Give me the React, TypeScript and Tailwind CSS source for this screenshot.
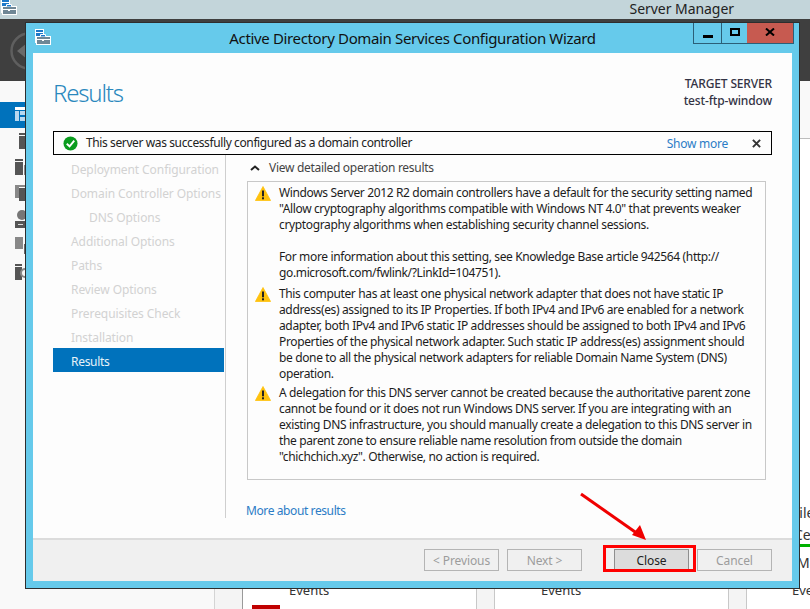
import React from "react";

const font = { fontFamily: '"Noto Sans", "Open Sans", sans-serif' };

function AppIcon({ className }: { className: string }) {
  return (
    <svg viewBox="0 0 16 16" className={className}>
      <rect x="0.5" y="0.5" width="8" height="13" fill="#1e78c8" stroke="#ffffff" />
      <rect x="1" y="3" width="7" height="1" fill="#ffffff" />
      <rect x="1.5" y="7.5" width="14" height="8" fill="#6f8796" stroke="#ffffff" />
      <path d="M5.5 7.5V5.5H10.5V7.5" fill="#1e78c8" stroke="#ffffff" />
      <path d="M1.5 10.5H15.5" stroke="#ffffff" />
      <rect x="7" y="10" width="2" height="2" fill="#ffffff" />
    </svg>
  );
}

function Warn({ className }: { className: string }) {
  return (
    <svg viewBox="0 0 16 15" className={className}>
      <path d="M8 0.5L15.6 14.5H0.4Z" fill="#ffc20e" stroke="#ffc20e" strokeWidth="0.8" strokeLinejoin="round" />
      <rect x="7" y="4.5" width="2" height="5.8" fill="#222222" />
      <rect x="7" y="11.3" width="2" height="2" fill="#222222" />
    </svg>
  );
}

function NavIcons({ className }: { className: string }) {
  return (
    <svg viewBox="0 0 30 200" className={className}>
      <rect x="15" y="17" width="11" height="3" fill="#ffffff" />
      <rect x="15" y="21" width="4" height="10" fill="#b8d8f0" />
      <rect x="20" y="21" width="6" height="4" fill="#b8d8f0" />
      <rect x="20" y="27" width="6" height="4" fill="#b8d8f0" />
      <rect x="19" y="43" width="7" height="2" fill="#555555" />
      <rect x="19" y="46" width="7" height="13" fill="#555555" />
      <rect x="15" y="69" width="8" height="2" fill="#555555" />
      <rect x="15" y="72" width="8" height="13" fill="#555555" />
      <rect x="24" y="75" width="2" height="10" fill="#888888" />
      <rect x="15" y="95" width="4" height="13" fill="#888888" />
      <rect x="19" y="95" width="6" height="2" fill="#888888" />
      <rect x="19" y="98" width="7" height="13" fill="#555555" />
      <circle cx="22" cy="125" r="5" fill="#777777" />
      <rect x="15" y="131" width="11" height="7" fill="#555555" />
      <rect x="18" y="134" width="5" height="1" fill="#dddddd" />
      <rect x="15" y="147" width="8" height="12" fill="#888888" />
      <rect x="24" y="154" width="2" height="10" fill="#666666" />
      <rect x="15" y="174" width="7" height="2" fill="#555555" />
      <rect x="15" y="177" width="7" height="13" fill="#555555" />
      <circle cx="25" cy="183" r="4" fill="none" stroke="#888888" strokeWidth="2" />
    </svg>
  );
}

const steps = [
  ["Deployment Configuration", false],
  ["Domain Controller Options", false],
  ["DNS Options", true],
  ["Additional Options", false],
  ["Paths", false],
  ["Review Options", false],
  ["Prerequisites Check", false],
  ["Installation", false],
] as const;

const block1 = [
  "Windows Server 2012 R2 domain controllers have a default for the security setting named",
  '"Allow cryptography algorithms compatible with Windows NT 4.0" that prevents weaker',
  "cryptography algorithms when establishing security channel sessions.",
  "\u00a0",
  "For more information about this setting, see Knowledge Base article 942564 (http://",
  "go.microsoft.com/fwlink/?LinkId=104751).",
];
const block2 = [
  "This computer has at least one physical network adapter that does not have static IP",
  "address(es) assigned to its IP Properties. If both IPv4 and IPv6 are enabled for a network",
  "adapter, both IPv4 and IPv6 static IP addresses should be assigned to both IPv4 and IPv6",
  "Properties of the physical network adapter. Such static IP address(es) assignment should",
  "be done to all the physical network adapters for reliable Domain Name System (DNS)",
  "operation.",
];
const block3 = [
  "A delegation for this DNS server cannot be created because the authoritative parent zone",
  "cannot be found or it does not run Windows DNS server. If you are integrating with an",
  "existing DNS infrastructure, you should manually create a delegation to this DNS server in",
  "the parent zone to ensure reliable name resolution from outside the domain",
  '"chichchich.xyz". Otherwise, no action is required.',
];

function Block({ lines, className }: { lines: string[]; className?: string }) {
  return (
    <div className={`flex ${className ?? ""}`}>
      <div className="w-[31px] shrink-0 pl-[7px] pt-[1px]">
        <Warn className="h-[15px] w-[16px]" />
      </div>
      <div className="whitespace-nowrap text-[12px] leading-[16px] tracking-[-0.36px] text-[#1c1c1c]">
        {lines.map((l, i) => (
          <div key={i}>{l}</div>
        ))}
      </div>
    </div>
  );
}

function Btn({ label, active, className }: { label: string; active?: boolean; className?: string }) {
  return (
    <div
      className={`flex h-[22px] w-[75px] items-center justify-center border pt-[2px] text-[12px] tracking-[-0.1px] ${
        active ? "border-[#8f8f8f] bg-[#dcdcdc] text-[#222222]" : "border-[#b4b4b4] bg-[#f0f0f0] text-[#9c9c9c]"
      } ${className ?? ""}`}
    >
      {label}
    </div>
  );
}

export default function App() {
  return (
    <div className="relative flex h-[609px] w-[810px] flex-col overflow-hidden bg-[#f9f9f9]" style={font}>
      {/* Server Manager behind */}
      <div className="flex h-[19px] shrink-0 items-center justify-end bg-[#c3d5da] pb-[3px] pr-[76px] text-[14px] tracking-[-0.05px] text-[#222222]">
        <span>Server Manager</span>
      </div>
      <div className="h-[62px] shrink-0 bg-[#3f3f3f] pl-[10px] pt-[13px]">
        <svg viewBox="0 0 38 38" className="h-[38px] w-[38px]">
          <circle cx="19" cy="19" r="17.5" fill="none" stroke="#5f5f5f" strokeWidth="2.5" />
          <path d="M7 19L17 11V27Z" fill="#6a6a6a" />
        </svg>
      </div>
      <div className="flex min-h-0 flex-1">
        <div className="w-[215px] shrink-0 border-r border-[#d4d4d4] pt-[21px]">
          <div className="h-[26px] bg-[#0072bc]" />
        </div>
        <div className="w-[28px] shrink-0 border-r border-[#9a9a9a] bg-[#f4f4f4]" />
        <div className="min-w-0 flex-1 bg-white">
          <div className="h-[58px] border-b border-[#bdbdbd] bg-[#f9f9f9]" />
        </div>
      </div>

      {/* background tiles bottom */}
      <div className="absolute left-[243px] top-[581px] flex text-[13px] text-[#333333]">
        <div className="relative h-[40px] w-[234px] border-r border-[#c8c8c8] pl-[46px]">
          <div>Events</div>
          <div className="absolute left-[9px] top-[24px] h-[8px] w-[28px] bg-[#c00000]" />
        </div>
        <div className="h-[40px] w-[18px] border-r border-[#c8c8c8] bg-[#f4f4f4]" />
        <div className="h-[40px] w-[234px] border-r border-[#c8c8c8] pl-[46px]">Events</div>
        <div className="h-[40px] w-[18px] border-r border-[#c8c8c8] bg-[#f4f4f4]" />
        <div className="h-[40px] w-[100px] pl-[45px]">Events</div>
      </div>
      <div className="absolute left-[792px] top-[502px] w-[60px] text-[14px] text-[#333333]">
        <div className="h-[22px]">Files</div>
        <div className="h-[20px] pl-[2px]">Ce</div>
        <div className="h-[3px] bg-[#00b000]" />
        <div className="pl-[5px] pt-[5px]">Ma</div>
      </div>
      <NavIcons className="absolute left-0 top-[90px] h-[200px] w-[30px]" />
      <AppIcon className="absolute left-[1px] top-[-1px] h-[16px] w-[16px]" />

      {/* Wizard window */}
      <div className="absolute left-[25px] top-[22px] flex h-[567px] w-[775px] flex-col border border-[#2e2e2e] bg-[#66caeb] px-[7px] pb-[7px]">
        <div className="relative flex h-[30px] shrink-0 items-center justify-center text-[15px] tracking-[-0.35px] text-[#111111]">
          <AppIcon className="absolute left-[2px] top-[6px] h-[16px] w-[16px]" />
          <span>Active Directory Domain Services Configuration Wizard</span>
          <div className="absolute right-[-2px] top-0 flex h-[21px] border border-t-0 border-[#2b5f78]">
            <div className="flex w-[28px] items-end justify-center border-r border-[#2b5f78] pb-[5px]">
              <div className="h-[3px] w-[10px] bg-black" />
            </div>
            <div className="flex w-[25px] items-center justify-center">
              <div className="mb-[2px] h-[8px] w-[10px] border-2 border-black" />
            </div>
            <div className="flex w-[46px] items-center justify-center bg-[#c75a50]">
              <svg viewBox="0 0 10 8" className="mb-[2px] h-[8px] w-[10px]">
                <path d="M1 0.5L9 7.5M9 0.5L1 7.5" stroke="#000" strokeWidth="2" />
              </svg>
            </div>
          </div>
        </div>
        <div className="flex min-h-0 flex-1 flex-col bg-[#fdfdfd]">
          <div className="flex h-[78px] shrink-0 justify-between px-[20px]">
            <div className="pt-[22px] text-[24px] leading-[36px] font-light tracking-[-1.2px] text-[#2a88bd]">Results</div>
            <div className="pt-[22px] text-right text-[12px] leading-[17px] font-medium tracking-[-0.15px] text-[#333344]">
              <div>TARGET SERVER</div>
              <div>test-ftp-window</div>
            </div>
          </div>
          <div className="mx-[20px] flex h-[24px] shrink-0 items-center border border-black pl-[9px] pr-[10px] text-[12px]">
            <svg viewBox="0 0 16 16" className="h-[15px] w-[15px] shrink-0">
              <circle cx="8" cy="8" r="7.5" fill="#0a9c1e" />
              <path d="M4 8.3L7 11L12 5" fill="none" stroke="#fff" strokeWidth="2" />
            </svg>
            <span className="ml-[8px] tracking-[-0.39px] text-[#222222]">This server was successfully configured as a domain controller</span>
            <span className="ml-auto pt-[2px] tracking-[-0.25px] text-[#2b7cc6]">Show more</span>
            <svg viewBox="0 0 10 10" className="ml-[24px] h-[9px] w-[9px]">
              <path d="M1 1L9 9M9 1L1 9" stroke="#333" strokeWidth="2.2" />
            </svg>
          </div>
          <div className="flex min-h-0 flex-1">
            <div className="ml-[20px] flex h-[363px] w-[173px] shrink-0 flex-col border-r border-[#cfcfcf] pt-[1px]">
              {steps.map(([s, ind]) => (
                <div
                  key={s}
                  className={`h-[24px] shrink-0 text-[12px] leading-[28px] tracking-[-0.08px] text-[#d2d2d2] ${ind ? "pl-[36px]" : "pl-[18px]"}`}
                >
                  {s}
                </div>
              ))}
              <div className="mr-px h-[24px] shrink-0 bg-[#0072bc] pl-[18px] text-[12px] leading-[28px] tracking-[-0.3px] text-[#e8f2f8]">Results</div>
            </div>
            <div className="min-w-0 flex-1 pl-[21px] pr-[26px]">
              <div className="flex h-[26px] items-center pl-[3px] text-[12px] tracking-[-0.3px] text-[#444444]">
                <svg viewBox="0 0 10 6" className="h-[6px] w-[10px]">
                  <path d="M1 5L5 1.5L9 5" fill="none" stroke="#222" strokeWidth="2" />
                </svg>
                <span className="ml-[9px]">View detailed operation results</span>
              </div>
              <div className="h-[299px] overflow-hidden border border-[#c8c8c8] pt-[3px]">
                <Block lines={block1} />
                <Block lines={block2} className="mt-[5px]" />
                <Block lines={block3} className="mt-[3px]" />
              </div>
              <div className="-ml-px pt-[22px] text-[12px] leading-[17px] tracking-[-0.4px] text-[#2b7cc6]">More about results</div>
            </div>
          </div>
          <div className="flex h-[43px] shrink-0 items-start gap-[8px] border-t-2 border-[#dcdcdc] bg-[#f0f0f0] pl-[391px] pt-[9px]">
            <Btn label="< Previous" />
            <Btn label="Next >" />
            <Btn label="Close" active className="ml-[24px]" />
            <Btn label="Cancel" />
          </div>
        </div>
      </div>

      {/* annotations */}
      <div className="absolute left-[603px] top-[545px] h-[27px] w-[93px] border-[3px] border-[#ff0000]" />
      <svg viewBox="0 0 810 609" className="absolute left-0 top-0 h-[609px] w-[810px]">
        <path d="M581 494L638 534" stroke="#f00000" strokeWidth="3" fill="none" />
        <path d="M646 540L632 535L640 525Z" fill="#f00000" />
      </svg>
    </div>
  );
}
